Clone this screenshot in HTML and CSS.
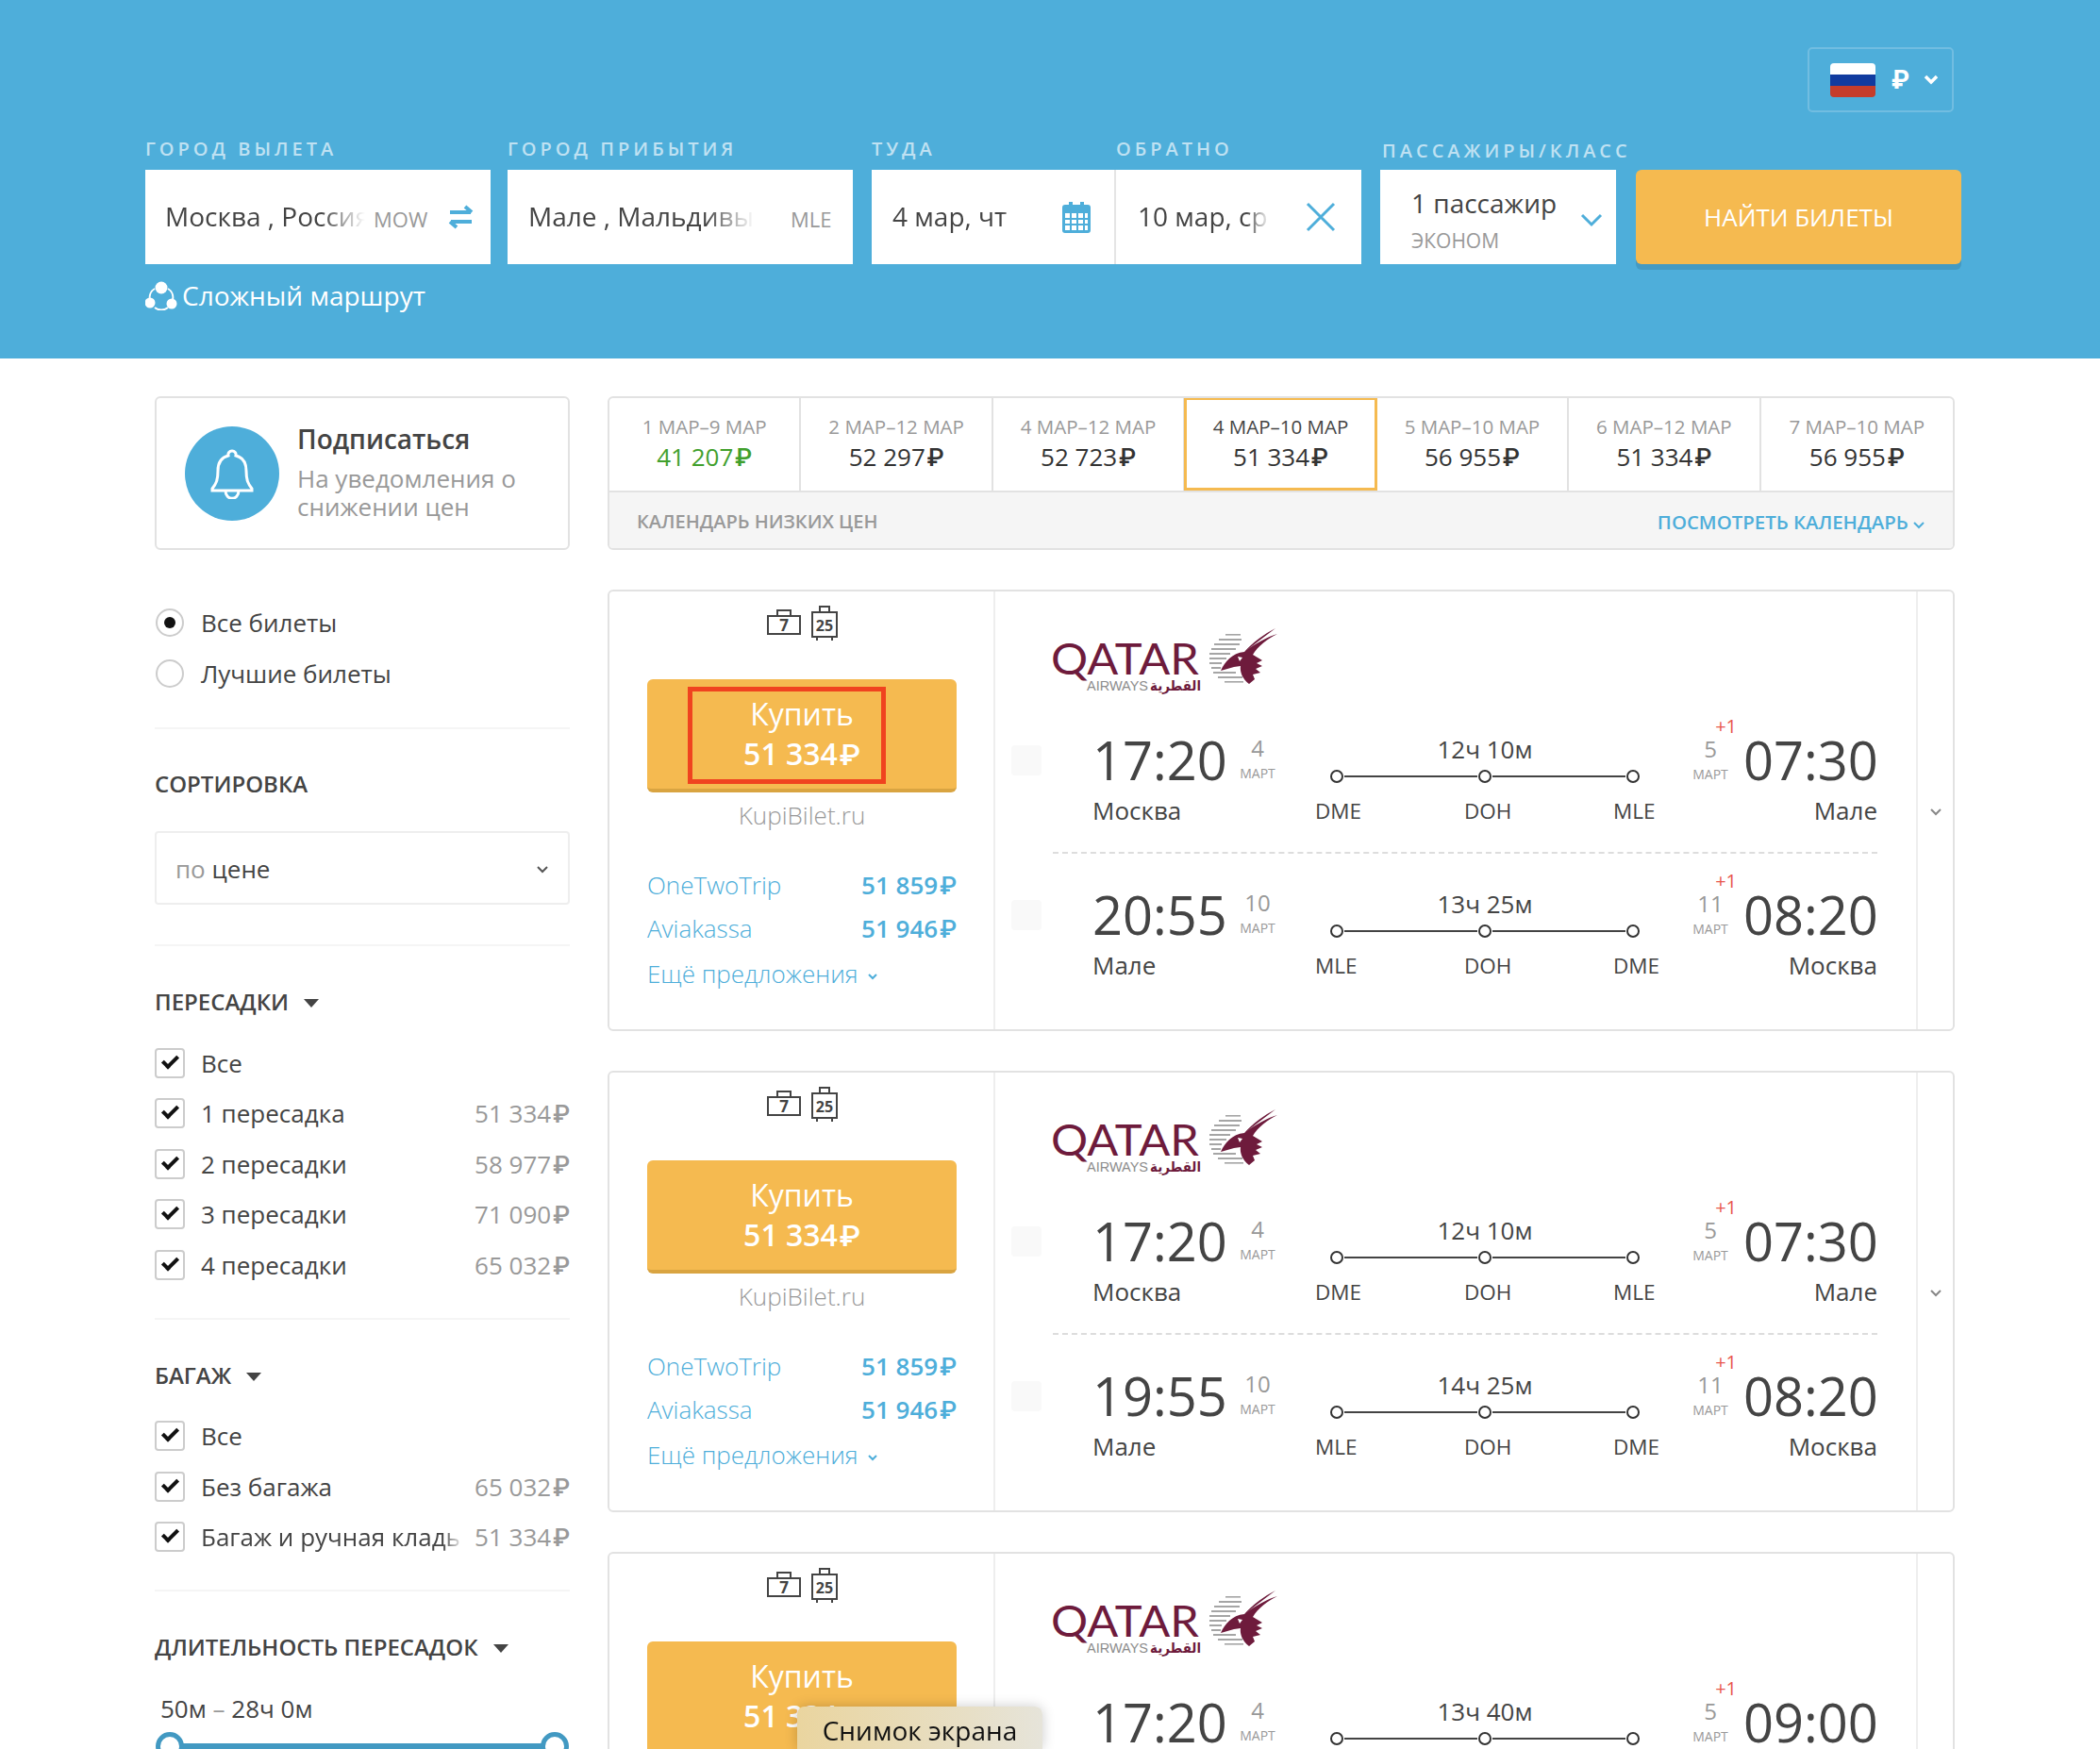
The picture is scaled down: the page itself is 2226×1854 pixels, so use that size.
FILE: index.html
```html
<!DOCTYPE html>
<html lang="ru">
<head>
    <meta charset="UTF-8">
    <title>Поиск авиабилетов</title>
    <link rel="stylesheet" href="styles.css">
</head>
<body>

<svg class="defs" width="0" height="0">
    <symbol id="qatar-mark" viewBox="160 0 80 66">
        <g fill="#a5a5a5">
            <rect x="183" y="8" width="16" height="1.6"/>
            <rect x="176" y="13" width="24" height="2"/>
            <rect x="171" y="18" width="27" height="2"/>
            <rect x="168" y="23" width="26" height="2"/>
            <rect x="166" y="28" width="22" height="2"/>
            <rect x="166" y="33" width="18" height="2"/>
            <rect x="166" y="38" width="13" height="2"/>
            <rect x="168" y="43" width="10" height="2"/>
            <rect x="170" y="48" width="24" height="2"/>
            <rect x="175" y="53" width="26" height="2"/>
            <rect x="182" y="58" width="20" height="1.6"/>
        </g>
        <path fill="#6e1b3c" d="M236 2C224 8 212 17 203 27 216 17 228 11 238 8 228 13 217 21 212 30L222 36 216 39 222 42 215 45 220 49 212 51 214 56 208 61C201 56 198 48 199 42L192 43 178 47C182 38 190 28 203 27Z"/>
        <path fill="#fff" d="M196 32l5 1-3 4z"/>
    </symbol>
    <symbol id="bag-small" viewBox="0 0 36 28">
        <path d="M11 8V2h14v6M1 8h34v19H1z" fill="none" stroke="#444" stroke-width="2"/>
    </symbol>
    <symbol id="bag-big" viewBox="0 0 28 38">
        <path d="M9 7V1h10v6M1 7h26v26H1zM6 33v4M22 33v4" fill="none" stroke="#444" stroke-width="2"/>
    </symbol>
</svg>

<header class="topbar">
    <div class="currency-row">
        <div class="currency">
            <span class="flag"><i class="flag-w"></i><i class="flag-b"></i><i class="flag-r"></i></span>
            <span class="currency-sign">₽</span>
            <svg class="currency-arrow" width="16" height="11" viewBox="0 0 16 11"><path d="M2 2l6 6 6-6" fill="none" stroke="#fff" stroke-width="3.5"/></svg>
        </div>
    </div>

    <form class="search">
        <div class="field field-city">
            <label>ГОРОД ВЫЛЕТА</label>
            <div class="box">
                <span class="box-text">Москва , Россия</span>
                <span class="iata">MOW</span>
                <svg class="swap" width="31" height="26" viewBox="0 0 31 26"><path d="M4 8h22M20 2l7 6M27 18H5M11 24l-7-6" fill="none" stroke="#4eaeda" stroke-width="4"/></svg>
            </div>
        </div>
        <div class="field field-city">
            <label>ГОРОД ПРИБЫТИЯ</label>
            <div class="box">
                <span class="box-text box-text-wide">Мале , Мальдивы</span>
                <span class="iata iata-to">MLE</span>
            </div>
        </div>
        <div class="field field-there">
            <label>ТУДА</label>
            <div class="box">
                <span class="box-date">4 мар, чт</span>
                <svg class="calendar" width="30" height="34" viewBox="0 0 30 34">
                    <path fill="#4eaeda" d="M3 4h4V1h4v3h8V1h4v3h4a3 3 0 0 1 3 3v24a3 3 0 0 1-3 3H3a3 3 0 0 1-3-3V7a3 3 0 0 1 3-3z"/>
                    <path fill="#fff" d="M3 13h5v5H3zM10 13h5v5h-5zM17 13h5v5h-5zM24 13h3v5h-3zM3 20h5v4H3zM10 20h5v4h-5zM17 20h5v4h-5zM24 20h3v4h-3zM3 26h5v5H3zM10 26h5v5h-5zM17 26h5v5h-5zM24 26h3v5h-3z"/>
                </svg>
            </div>
        </div>
        <div class="field field-back">
            <label>ОБРАТНО</label>
            <div class="box">
                <span class="box-date">10 мар, ср</span>
                <svg class="clear" width="32" height="32" viewBox="0 0 32 32"><path d="M2 2l28 28M30 2L2 30" fill="none" stroke="#4eaeda" stroke-width="3"/></svg>
            </div>
        </div>
        <div class="field field-pax">
            <label>ПАССАЖИРЫ/КЛАСС</label>
            <div class="box box-pax">
                <div class="pax-text">
                    <span class="pax-count">1 пассажир</span>
                    <span class="pax-class">ЭКОНОМ</span>
                </div>
                <svg class="pax-arrow" width="24" height="16" viewBox="0 0 24 16"><path d="M2 3l10 10L22 3" fill="none" stroke="#4eaeda" stroke-width="3"/></svg>
            </div>
        </div>
        <button class="find" type="button">НАЙТИ БИЛЕТЫ</button>
    </form>

    <a class="complex" href="#">
        <svg width="34" height="31" viewBox="0 0 34 31">
            <path d="M10 8a11 11 0 0 0-5 12M24 8a11 11 0 0 1 5 12M10 28a11 11 0 0 0 14 0" fill="none" stroke="#fff" stroke-width="2"/>
            <circle cx="17" cy="7" r="6.5" fill="#fff"/><circle cx="5" cy="23" r="5.5" fill="#fff"/><circle cx="28" cy="24" r="5.5" fill="#fff"/>
        </svg>
        Сложный маршрут
    </a>
</header>

<main class="page">
    <aside class="sidebar">
        <div class="subscribe">
            <div class="bell">
                <svg width="48" height="54" viewBox="0 0 48 54"><path d="M24 3a4 4 0 0 1 4 5c8 2 11 8 11 16 0 10 2 14 6 19v2H3v-2c4-5 6-9 6-19 0-8 3-14 11-16a4 4 0 0 1 4-5zM17 45c0 11 14 11 14 0" fill="none" stroke="#fff" stroke-width="3"/></svg>
            </div>
            <div class="subscribe-body">
                <div class="subscribe-title">Подписаться</div>
                <div class="subscribe-text">На уведомления о снижении цен</div>
            </div>
        </div>

        <div class="filter radios">
            <div class="row"><span class="radio radio-on"></span>Все билеты</div>
            <div class="row"><span class="radio"></span>Лучшие билеты</div>
        </div>

        <div class="filter filter-sort">
            <h4 class="filter-title">СОРТИРОВКА</h4>
            <div class="select">
                <span><span class="select-dim">по</span> цене</span>
                <svg width="14" height="9" viewBox="0 0 14 9"><path d="M2 2l5 5 5-5" fill="none" stroke="#555" stroke-width="2"/></svg>
            </div>
        </div>

        <div class="filter">
            <h4 class="filter-title">ПЕРЕСАДКИ<i class="caret"></i></h4>
            <div class="checks">
                <div class="row"><span class="check"></span><span class="row-name">Все</span></div>
                <div class="row"><span class="check"></span><span class="row-name">1 пересадка</span><span class="row-price">51 334<i class="rub">₽</i></span></div>
                <div class="row"><span class="check"></span><span class="row-name">2 пересадки</span><span class="row-price">58 977<i class="rub">₽</i></span></div>
                <div class="row"><span class="check"></span><span class="row-name">3 пересадки</span><span class="row-price">71 090<i class="rub">₽</i></span></div>
                <div class="row"><span class="check"></span><span class="row-name">4 пересадки</span><span class="row-price">65 032<i class="rub">₽</i></span></div>
            </div>
        </div>

        <div class="filter">
            <h4 class="filter-title">БАГАЖ<i class="caret"></i></h4>
            <div class="checks">
                <div class="row"><span class="check"></span><span class="row-name">Все</span></div>
                <div class="row"><span class="check"></span><span class="row-name">Без багажа</span><span class="row-price">65 032<i class="rub">₽</i></span></div>
                <div class="row"><span class="check"></span><span class="row-name row-cut">Багаж и ручная кладь</span><span class="row-price">51 334<i class="rub">₽</i></span></div>
            </div>
        </div>

        <div class="filter filter-last">
            <h4 class="filter-title">ДЛИТЕЛЬНОСТЬ ПЕРЕСАДОК<i class="caret"></i></h4>
            <div class="range-text">50м <span class="range-dash">–</span> 28ч 0м</div>
            <div class="slider"><span class="slider-knob"></span><span class="slider-knob"></span></div>
        </div>
    </aside>

    <section class="results">
        <div class="calendar-box">
            <div class="tabs">
                <div class="tab"><span class="tab-dates">1 МАР–9 МАР</span><span class="tab-price tab-low">41 207<i class="rub">₽</i></span></div>
                <div class="tab"><span class="tab-dates">2 МАР–12 МАР</span><span class="tab-price">52 297<i class="rub">₽</i></span></div>
                <div class="tab"><span class="tab-dates">4 МАР–12 МАР</span><span class="tab-price">52 723<i class="rub">₽</i></span></div>
                <div class="tab tab-active"><span class="tab-dates">4 МАР–10 МАР</span><span class="tab-price">51 334<i class="rub">₽</i></span></div>
                <div class="tab"><span class="tab-dates">5 МАР–10 МАР</span><span class="tab-price">56 955<i class="rub">₽</i></span></div>
                <div class="tab"><span class="tab-dates">6 МАР–12 МАР</span><span class="tab-price">51 334<i class="rub">₽</i></span></div>
                <div class="tab"><span class="tab-dates">7 МАР–10 МАР</span><span class="tab-price">56 955<i class="rub">₽</i></span></div>
            </div>
            <div class="calendar-bar">
                <span>КАЛЕНДАРЬ НИЗКИХ ЦЕН</span>
                <a class="calendar-link" href="#">ПОСМОТРЕТЬ КАЛЕНДАРЬ
                    <svg width="12" height="8" viewBox="0 0 12 8"><path d="M1 1l5 5 5-5" fill="none" stroke="#4eaeda" stroke-width="2"/></svg>
                </a>
            </div>
        </div>

        <!-- билет 1 -->
        <article class="ticket">
            <div class="offer">
                <div class="bags">
                    <svg class="bag-s" width="36" height="28" viewBox="0 0 36 28"><use href="#bag-small"/><text x="18" y="24" class="bag-num">7</text></svg>
                    <svg class="bag-b" width="28" height="38" viewBox="0 0 28 38"><use href="#bag-big"/><text x="14" y="27" class="bag-num">25</text></svg>
                </div>
                <a class="buy" href="#">
                    <span class="buy-label">Купить</span>
                    <span class="buy-price">51 334<i class="rub">₽</i></span>
                    <span class="highlight"></span>
                </a>
                <div class="seller">KupiBilet.ru</div>
                <div class="other other-first"><span>OneTwoTrip</span><b>51 859<i class="rub">₽</i></b></div>
                <div class="other"><span>Aviakassa</span><b>51 946<i class="rub">₽</i></b></div>
                <a class="more" href="#">Ещё предложения
                    <svg width="10" height="7" viewBox="0 0 10 7"><path d="M1 1l4 4 4-4" fill="none" stroke="#4eaeda" stroke-width="2"/></svg>
                </a>
            </div>
            <div class="flights">
                <svg class="logo" width="240" height="75" viewBox="0 0 240 75">
                    <text x="1" y="51" class="logo-name" textLength="157" lengthAdjust="spacingAndGlyphs">QATAR</text>
                    <text x="39" y="68" class="logo-sub" textLength="65" lengthAdjust="spacingAndGlyphs">AIRWAYS</text>
                    <text x="106" y="68" class="logo-ar" textLength="54" lengthAdjust="spacingAndGlyphs">القطرية</text>
                    <use href="#qatar-mark" x="163" y="0" width="80" height="66"/>
                </svg>
                <div class="segment">
                    <span class="seg-check"></span>
                    <div class="seg-body">
                        <div class="seg-dep">
                            <div class="seg-time"><span class="time">17:20</span><span class="date"><span class="date-day">4</span><span class="date-month">МАРТ</span></span></div>
                            <div class="city">Москва</div>
                        </div>
                        <div class="route">
                            <div class="duration">12ч 10м</div>
                            <div class="route-line"><i class="dot"></i><i class="line"></i><i class="dot"></i><i class="line"></i><i class="dot"></i></div>
                            <div class="codes"><span>DME</span><span>DOH</span><span>MLE</span></div>
                        </div>
                        <div class="seg-arr">
                            <div class="seg-time"><span class="date date-arr"><span class="plus">+1</span><span class="date-day">5</span><span class="date-month">МАРТ</span></span><span class="time">07:30</span></div>
                            <div class="city">Мале</div>
                        </div>
                    </div>
                </div>
                <div class="segment">
                    <span class="seg-check"></span>
                    <div class="seg-body seg-dashed">
                        <div class="seg-dep">
                            <div class="seg-time"><span class="time">20:55</span><span class="date"><span class="date-day">10</span><span class="date-month">МАРТ</span></span></div>
                            <div class="city">Мале</div>
                        </div>
                        <div class="route">
                            <div class="duration">13ч 25м</div>
                            <div class="route-line"><i class="dot"></i><i class="line"></i><i class="dot"></i><i class="line"></i><i class="dot"></i></div>
                            <div class="codes"><span>MLE</span><span>DOH</span><span>DME</span></div>
                        </div>
                        <div class="seg-arr">
                            <div class="seg-time"><span class="date date-arr"><span class="plus">+1</span><span class="date-day">11</span><span class="date-month">МАРТ</span></span><span class="time">08:20</span></div>
                            <div class="city">Москва</div>
                        </div>
                    </div>
                </div>
            </div>
            <div class="expand"><svg width="12" height="8" viewBox="0 0 12 8"><path d="M1 1l5 5 5-5" fill="none" stroke="#888" stroke-width="2"/></svg></div>
        </article>

        <!-- билет 2 -->
        <article class="ticket">
            <div class="offer">
                <div class="bags">
                    <svg class="bag-s" width="36" height="28" viewBox="0 0 36 28"><use href="#bag-small"/><text x="18" y="24" class="bag-num">7</text></svg>
                    <svg class="bag-b" width="28" height="38" viewBox="0 0 28 38"><use href="#bag-big"/><text x="14" y="27" class="bag-num">25</text></svg>
                </div>
                <a class="buy" href="#">
                    <span class="buy-label">Купить</span>
                    <span class="buy-price">51 334<i class="rub">₽</i></span>
                </a>
                <div class="seller">KupiBilet.ru</div>
                <div class="other other-first"><span>OneTwoTrip</span><b>51 859<i class="rub">₽</i></b></div>
                <div class="other"><span>Aviakassa</span><b>51 946<i class="rub">₽</i></b></div>
                <a class="more" href="#">Ещё предложения
                    <svg width="10" height="7" viewBox="0 0 10 7"><path d="M1 1l4 4 4-4" fill="none" stroke="#4eaeda" stroke-width="2"/></svg>
                </a>
            </div>
            <div class="flights">
                <svg class="logo" width="240" height="75" viewBox="0 0 240 75">
                    <text x="1" y="51" class="logo-name" textLength="157" lengthAdjust="spacingAndGlyphs">QATAR</text>
                    <text x="39" y="68" class="logo-sub" textLength="65" lengthAdjust="spacingAndGlyphs">AIRWAYS</text>
                    <text x="106" y="68" class="logo-ar" textLength="54" lengthAdjust="spacingAndGlyphs">القطرية</text>
                    <use href="#qatar-mark" x="163" y="0" width="80" height="66"/>
                </svg>
                <div class="segment">
                    <span class="seg-check"></span>
                    <div class="seg-body">
                        <div class="seg-dep">
                            <div class="seg-time"><span class="time">17:20</span><span class="date"><span class="date-day">4</span><span class="date-month">МАРТ</span></span></div>
                            <div class="city">Москва</div>
                        </div>
                        <div class="route">
                            <div class="duration">12ч 10м</div>
                            <div class="route-line"><i class="dot"></i><i class="line"></i><i class="dot"></i><i class="line"></i><i class="dot"></i></div>
                            <div class="codes"><span>DME</span><span>DOH</span><span>MLE</span></div>
                        </div>
                        <div class="seg-arr">
                            <div class="seg-time"><span class="date date-arr"><span class="plus">+1</span><span class="date-day">5</span><span class="date-month">МАРТ</span></span><span class="time">07:30</span></div>
                            <div class="city">Мале</div>
                        </div>
                    </div>
                </div>
                <div class="segment">
                    <span class="seg-check"></span>
                    <div class="seg-body seg-dashed">
                        <div class="seg-dep">
                            <div class="seg-time"><span class="time">19:55</span><span class="date"><span class="date-day">10</span><span class="date-month">МАРТ</span></span></div>
                            <div class="city">Мале</div>
                        </div>
                        <div class="route">
                            <div class="duration">14ч 25м</div>
                            <div class="route-line"><i class="dot"></i><i class="line"></i><i class="dot"></i><i class="line"></i><i class="dot"></i></div>
                            <div class="codes"><span>MLE</span><span>DOH</span><span>DME</span></div>
                        </div>
                        <div class="seg-arr">
                            <div class="seg-time"><span class="date date-arr"><span class="plus">+1</span><span class="date-day">11</span><span class="date-month">МАРТ</span></span><span class="time">08:20</span></div>
                            <div class="city">Москва</div>
                        </div>
                    </div>
                </div>
            </div>
            <div class="expand"><svg width="12" height="8" viewBox="0 0 12 8"><path d="M1 1l5 5 5-5" fill="none" stroke="#888" stroke-width="2"/></svg></div>
        </article>

        <!-- билет 3, обрезан низом окна -->
        <article class="ticket">
            <div class="offer">
                <div class="bags">
                    <svg class="bag-s" width="36" height="28" viewBox="0 0 36 28"><use href="#bag-small"/><text x="18" y="24" class="bag-num">7</text></svg>
                    <svg class="bag-b" width="28" height="38" viewBox="0 0 28 38"><use href="#bag-big"/><text x="14" y="27" class="bag-num">25</text></svg>
                </div>
                <a class="buy" href="#">
                    <span class="buy-label">Купить</span>
                    <span class="buy-price">51 334<i class="rub">₽</i></span>
                </a>
            </div>
            <div class="flights">
                <svg class="logo" width="240" height="75" viewBox="0 0 240 75">
                    <text x="1" y="51" class="logo-name" textLength="157" lengthAdjust="spacingAndGlyphs">QATAR</text>
                    <text x="39" y="68" class="logo-sub" textLength="65" lengthAdjust="spacingAndGlyphs">AIRWAYS</text>
                    <text x="106" y="68" class="logo-ar" textLength="54" lengthAdjust="spacingAndGlyphs">القطرية</text>
                    <use href="#qatar-mark" x="163" y="0" width="80" height="66"/>
                </svg>
                <div class="segment">
                    <span class="seg-check"></span>
                    <div class="seg-body">
                        <div class="seg-dep">
                            <div class="seg-time"><span class="time">17:20</span><span class="date"><span class="date-day">4</span><span class="date-month">МАРТ</span></span></div>
                        </div>
                        <div class="route">
                            <div class="duration">13ч 40м</div>
                            <div class="route-line"><i class="dot"></i><i class="line"></i><i class="dot"></i><i class="line"></i><i class="dot"></i></div>
                        </div>
                        <div class="seg-arr">
                            <div class="seg-time"><span class="date date-arr"><span class="plus">+1</span><span class="date-day">5</span><span class="date-month">МАРТ</span></span><span class="time">09:00</span></div>
                        </div>
                    </div>
                </div>
            </div>
            <div class="expand"></div>
        </article>
    </section>
</main>

<div class="shot-label">Снимок экрана</div>

</body>
</html>
```

FILE: styles.css
```css
body {
    margin: 0;
    height: 100vh;
    overflow: hidden;
    font-family: 'Open Sans', sans-serif;
    font-size: 26px;
    color: #444;
    background-color: #fff;
}
a {
    text-decoration: none;
    color: inherit;
}
.defs {
    display: block;
    height: 0;
}
.rub {
    font-style: normal;
    font-family: 'Roboto', 'DejaVu Sans', sans-serif;
    font-weight: 500;
    margin-left: 2px;
}

/* header */
.topbar {
    height: 380px;
    box-sizing: border-box;
    padding: 50px 146px 0 154px;
    background-color: #4eaeda;
}
.currency-row {
    display: flex;
    justify-content: flex-end;
    margin-right: 9px;
}
.currency {
    width: 155px;
    height: 69px;
    box-sizing: border-box;
    padding-left: 22px;
    display: flex;
    align-items: center;
    border: 2px solid #71bde1;
    border-radius: 5px;
}
.flag {
    width: 48px;
    height: 36px;
    border-radius: 4px;
    overflow: hidden;
    display: flex;
    flex-direction: column;
}
.flag i {
    flex: 1;
}
.flag-w { background-color: #fff; }
.flag-b { background-color: #113b9f; }
.flag-r { background-color: #c53d2b; }
.currency-sign {
    margin-left: 17px;
    color: #fff;
    font-weight: 700;
    font-size: 27px;
    font-family: 'Roboto', 'DejaVu Sans', sans-serif;
}
.currency-arrow {
    margin-left: 15px;
}
.search {
    display: flex;
    margin-top: 24px;
}
.field label {
    display: block;
    height: 30px;
    line-height: 30px;
    margin-bottom: 7px;
    font-size: 20px;
    letter-spacing: 4px;
    font-weight: 600;
    color: #bfe1f2;
    white-space: nowrap;
}
.box {
    position: relative;
    height: 100px;
    display: flex;
    align-items: center;
    background-color: #fff;
    font-size: 28px;
    color: #444;
}
.field-city {
    width: 366px;
    margin-right: 18px;
}
.field-city + .field-city {
    margin-right: 20px;
}
.field-there {
    width: 259px;
}
.field-there .box {
    padding-left: 22px;
    border-right: 2px solid #e5e5e5;
}
.field-back {
    width: 260px;
    margin-right: 20px;
}
.field-back .box {
    padding-left: 23px;
}
.field-pax {
    width: 250px;
    margin-right: 21px;
}
.field-pax label {
    padding: 2px 0 0 2px;
    height: 28px;
    letter-spacing: 4px;
}
.box-text {
    width: 212px;
    margin: -2px 0 0 21px;
    white-space: nowrap;
    overflow: hidden;
    -webkit-mask-image: linear-gradient(to right, #000 78%, transparent 100%);
    mask-image: linear-gradient(to right, #000 78%, transparent 100%);
}
.box-text-wide {
    width: 240px;
    margin-left: 22px;
}
.box-date {
    width: 140px;
    margin-top: -2px;
    white-space: nowrap;
    overflow: hidden;
    -webkit-mask-image: linear-gradient(to right, #000 82%, transparent 100%);
    mask-image: linear-gradient(to right, #000 82%, transparent 100%);
}
.iata {
    margin: 4px 0 0 9px;
    font-size: 22px;
    color: #999;
}
.iata-to {
    margin-left: 38px;
}
.swap {
    margin-left: 20px;
}
.calendar {
    margin-left: 40px;
}
.clear {
    margin-left: 38px;
}
.box-pax {
    padding-left: 33px;
}
.pax-text {
    display: flex;
    flex-direction: column;
    padding-top: 9px;
}
.pax-count {
    line-height: 38px;
}
.pax-class {
    margin-top: 3px;
    font-size: 21px;
    line-height: 36px;
    color: #999;
}
.pax-arrow {
    margin: 6px 0 0 25px;
}
.find {
    align-self: flex-end;
    width: 345px;
    height: 100px;
    border: 0;
    border-radius: 6px;
    background-color: #f5ba50;
    box-shadow: 0 6px 0 #449ac3;
    color: #fff;
    font-family: 'Open Sans', sans-serif;
    font-size: 26px;
}
.complex {
    display: inline-flex;
    align-items: center;
    gap: 5px;
    margin-top: 14px;
    color: #fff;
    font-size: 28px;
}

/* page columns */
.page {
    display: flex;
    padding: 40px 0 0 164px;
}
.sidebar {
    width: 440px;
    margin-right: 40px;
    flex-shrink: 0;
}
.results {
    width: 1428px;
    flex-shrink: 0;
}

/* subscribe */
.subscribe {
    height: 163px;
    box-sizing: border-box;
    display: flex;
    align-items: center;
    padding-left: 30px;
    border: 2px solid #e2e2e2;
    border-radius: 6px;
}
.bell {
    width: 100px;
    height: 100px;
    margin-right: 19px;
    flex-shrink: 0;
    border-radius: 50%;
    display: flex;
    align-items: center;
    justify-content: center;
    background-color: #4eaeda;
}
.subscribe-body {
    margin-top: -5px;
}
.subscribe-title {
    font-size: 28px;
    font-weight: 600;
    line-height: 38px;
}
.subscribe-text {
    font-size: 26px;
    line-height: 30px;
    margin-top: 8px;
    color: #999;
    width: 260px;
}

/* filters */
.filter {
    padding-bottom: 29px;
    border-bottom: 2px solid #f5f5f5;
    margin-bottom: 42px;
}
.filter-sort {
    padding-bottom: 42px;
}
.filter-last {
    border-bottom: 0;
    margin-bottom: 0;
    padding-bottom: 0;
}
.radios {
    margin-top: 50px;
    margin-bottom: 41px;
    padding-bottom: 30px;
}
.filter-title {
    margin: 0;
    font-size: 24px;
    font-weight: 600;
    line-height: 34px;
}
.caret {
    display: inline-block;
    margin-left: 16px;
    vertical-align: 3px;
    border-left: 8px solid transparent;
    border-right: 8px solid transparent;
    border-top: 9px solid #444;
}
.row {
    display: flex;
    align-items: center;
    height: 53.5px;
    white-space: nowrap;
}
.radios .row {
    height: 54px;
}
.radio {
    width: 30px;
    height: 30px;
    box-sizing: border-box;
    margin: 0 18px 0 1px;
    border: 2px solid #ccc;
    border-radius: 50%;
    display: flex;
    align-items: center;
    justify-content: center;
}
.radio-on::after {
    content: "";
    width: 12px;
    height: 12px;
    border-radius: 50%;
    background-color: #111;
}
.checks {
    margin-top: 21px;
}
.check {
    width: 32px;
    height: 32px;
    box-sizing: border-box;
    margin-right: 17px;
    flex-shrink: 0;
    border: 2px solid #ccc;
    border-radius: 4px;
    position: relative;
}
.check::after {
    content: "";
    position: absolute;
    left: 6px;
    top: 6px;
    width: 13px;
    height: 6px;
    border-left: 4px solid #111;
    border-bottom: 4px solid #111;
    transform: rotate(-45deg);
}
.row-name {
    flex: 1;
    overflow: hidden;
}
.row-cut {
    -webkit-mask-image: linear-gradient(to right, #000 92%, transparent 100%);
    mask-image: linear-gradient(to right, #000 92%, transparent 100%);
}
.row-price {
    margin-left: 12px;
    color: #999;
    font-size: 26px;
}
.select {
    display: flex;
    align-items: center;
    justify-content: space-between;
    height: 78px;
    box-sizing: border-box;
    margin-top: 33px;
    padding: 2px 20px 0 20px;
    border: 2px solid #eee;
    border-radius: 4px;
}
.select-dim {
    color: #999;
}
.range-text {
    margin-top: 30px;
    padding-left: 6px;
    font-size: 26px;
    line-height: 36px;
}
.range-dash {
    color: #999;
}
.slider {
    position: relative;
    margin-top: 7px;
    display: flex;
    justify-content: space-between;
    padding: 0 1px;
}
.slider::before {
    content: "";
    position: absolute;
    left: 16px;
    right: 16px;
    top: 12px;
    height: 8px;
    background-color: #4299c2;
}
.slider-knob {
    position: relative;
    width: 30px;
    height: 30px;
    box-sizing: border-box;
    border: 5px solid #4299c2;
    border-radius: 50%;
    background-color: #fff;
}

/* low price calendar */
.calendar-box {
    height: 163px;
    box-sizing: border-box;
    border: 2px solid #e2e2e2;
    border-radius: 6px;
    overflow: hidden;
}
.tabs {
    display: grid;
    grid-template-columns: repeat(7, 1fr);
    height: 98px;
    border-bottom: 2px solid #e2e2e2;
}
.tab {
    display: flex;
    flex-direction: column;
    align-items: center;
    padding-top: 15px;
    border-right: 2px solid #e2e2e2;
}
.tab:last-child {
    border-right: 0;
}
.tab-active {
    box-sizing: border-box;
    margin: -1px 0 0 -1px;
    padding-top: 13px;
    border: 3px solid #f5ba50;
}
.tab-dates {
    font-size: 20.5px;
    line-height: 30px;
    color: #999;
}
.tab-active .tab-dates {
    color: #444;
}
.tab-price {
    font-size: 26px;
    line-height: 35px;
    color: #333;
}
.tab-low {
    color: #41a02d;
}
.calendar-bar {
    display: flex;
    align-items: center;
    justify-content: space-between;
    height: 61px;
    padding: 0 30px 0 29px;
    background-color: #f5f5f5;
    color: #999;
    font-size: 20px;
    font-weight: 600;
}
.calendar-link {
    color: #4eaeda;
    font-size: 20.4px;
}

/* tickets */
.ticket {
    display: flex;
    height: 468px;
    box-sizing: border-box;
    margin-top: 42px;
    border: 2px solid #e2e2e2;
    border-radius: 6px;
}
.offer {
    width: 409px;
    box-sizing: border-box;
    flex-shrink: 0;
    padding: 15px 39px 0 40px;
    border-right: 2px solid #eee;
}
.bags {
    display: flex;
    justify-content: center;
    align-items: flex-end;
    gap: 11px;
    height: 38px;
}
.bag-num {
    font-size: 17px;
    font-weight: 700;
    fill: #444;
    text-anchor: middle;
    font-family: 'Open Sans', sans-serif;
}
.bag-b .bag-num {
    font-size: 16px;
}
.bag-s {
    margin-bottom: 7px;
}
.buy {
    position: relative;
    display: flex;
    flex-direction: column;
    align-items: center;
    height: 120px;
    box-sizing: border-box;
    margin-top: 40px;
    padding-top: 15px;
    border-bottom: 4px solid #d9a441;
    border-radius: 6px;
    background-color: #f5ba50;
    color: #fff;
}
.buy-label {
    font-size: 32px;
    line-height: 44px;
}
.buy-price {
    font-size: 32px;
    font-weight: 600;
    line-height: 40px;
}
.highlight {
    position: absolute;
    left: 43px;
    top: 8px;
    width: 210px;
    height: 103px;
    box-sizing: border-box;
    border: 5px solid #f0431f;
}
.seller {
    margin-top: 4px;
    line-height: 40px;
    text-align: center;
    color: #999;
    font-weight: 300;
}
.other {
    display: flex;
    justify-content: space-between;
    height: 46px;
    line-height: 46px;
    color: #4eaeda;
    font-weight: 300;
}
.other b {
    font-weight: 600;
}
.other-first {
    margin-top: 31px;
}
.more {
    display: block;
    margin-top: 7px;
    line-height: 36px;
    color: #4eaeda;
    font-weight: 300;
}
.more svg {
    margin-left: 4px;
    vertical-align: 3px;
}
.flights {
    width: 976px;
    box-sizing: border-box;
    padding-left: 17px;
    flex-shrink: 0;
}
.logo {
    display: block;
    margin: 37px 0 2px 41px;
    overflow: visible;
}
.logo-name {
    font-family: 'Lato', sans-serif;
    font-size: 46px;
    fill: #6e1b3c;
}
.logo-sub {
    font-family: 'Liberation Sans', sans-serif;
    font-size: 15px;
    fill: #8c8c8c;
}
.logo-ar {
    font-family: 'DejaVu Sans', sans-serif;
    font-size: 15px;
    font-weight: 700;
    fill: #6e1b3c;
}
.segment {
    display: flex;
    align-items: flex-start;
}
.seg-check {
    width: 32px;
    height: 32px;
    margin: 49px 12px 0 0;
    flex-shrink: 0;
    border-radius: 4px;
    background-color: #f9f9f9;
}
.seg-body {
    display: flex;
    width: 874px;
    height: 164px;
    box-sizing: border-box;
    padding-left: 42px;
    flex-shrink: 0;
}
.seg-dashed {
    border-top: 2px dashed #ddd;
    margin-top: -2px;
    height: 166px;
}
.seg-dep {
    width: 236px;
    flex-shrink: 0;
}
.seg-arr {
    flex: 1;
    text-align: right;
}
.seg-time {
    display: flex;
    align-items: flex-start;
    height: 60px;
    padding-top: 35px;
}
.seg-arr .seg-time {
    justify-content: flex-end;
}
.time {
    margin-top: -1px;
    font-size: 56px;
    line-height: 60px;
    width: 142px;
    white-space: nowrap;
}
.date {
    display: flex;
    flex-direction: column;
    align-items: center;
    width: 40px;
    margin: 5px 0 0 13px;
    color: #999;
}
.date-arr {
    margin: -18px 15px 0 0;
}
.plus {
    align-self: flex-end;
    margin-right: -8px;
    font-size: 20px;
    line-height: 24px;
    color: #e8574d;
}
.date-day {
    font-size: 24px;
    line-height: 24px;
}
.date-month {
    margin-top: 3px;
    font-size: 14px;
    line-height: 24px;
}
.city {
    margin-top: 5px;
    line-height: 36px;
}
.route {
    width: 360px;
    padding-top: 37px;
    flex-shrink: 0;
}
.duration {
    text-align: center;
    line-height: 32px;
}
.route-line {
    display: flex;
    align-items: center;
    width: 328px;
    height: 18px;
    margin: 4px auto 0;
}
.dot {
    width: 14px;
    height: 14px;
    box-sizing: border-box;
    flex-shrink: 0;
    border: 2px solid #333;
    border-radius: 50%;
}
.line {
    flex: 1;
    height: 2px;
    margin: 0 1px;
    background-color: #444;
}
.codes {
    display: grid;
    grid-template-columns: 158px 158px auto;
    margin-top: 13px;
    font-size: 22.5px;
    line-height: 30px;
}
.expand {
    flex: 1;
    padding-top: 210px;
    text-align: center;
    border-left: 2px solid #eee;
}

/* macOS screenshot tooltip over the page */
.shot-label {
    position: fixed;
    left: 845px;
    bottom: 0;
    width: 260px;
    height: 45px;
    line-height: 50px;
    text-align: center;
    font-size: 28px;
    color: #111;
    border-radius: 8px 8px 0 0;
    background: linear-gradient(to right, #ead59f, #e7dfc6 70%, #e6e4da);
    box-shadow: 0 0 14px rgba(0, 0, 0, 0.2);
}
```
